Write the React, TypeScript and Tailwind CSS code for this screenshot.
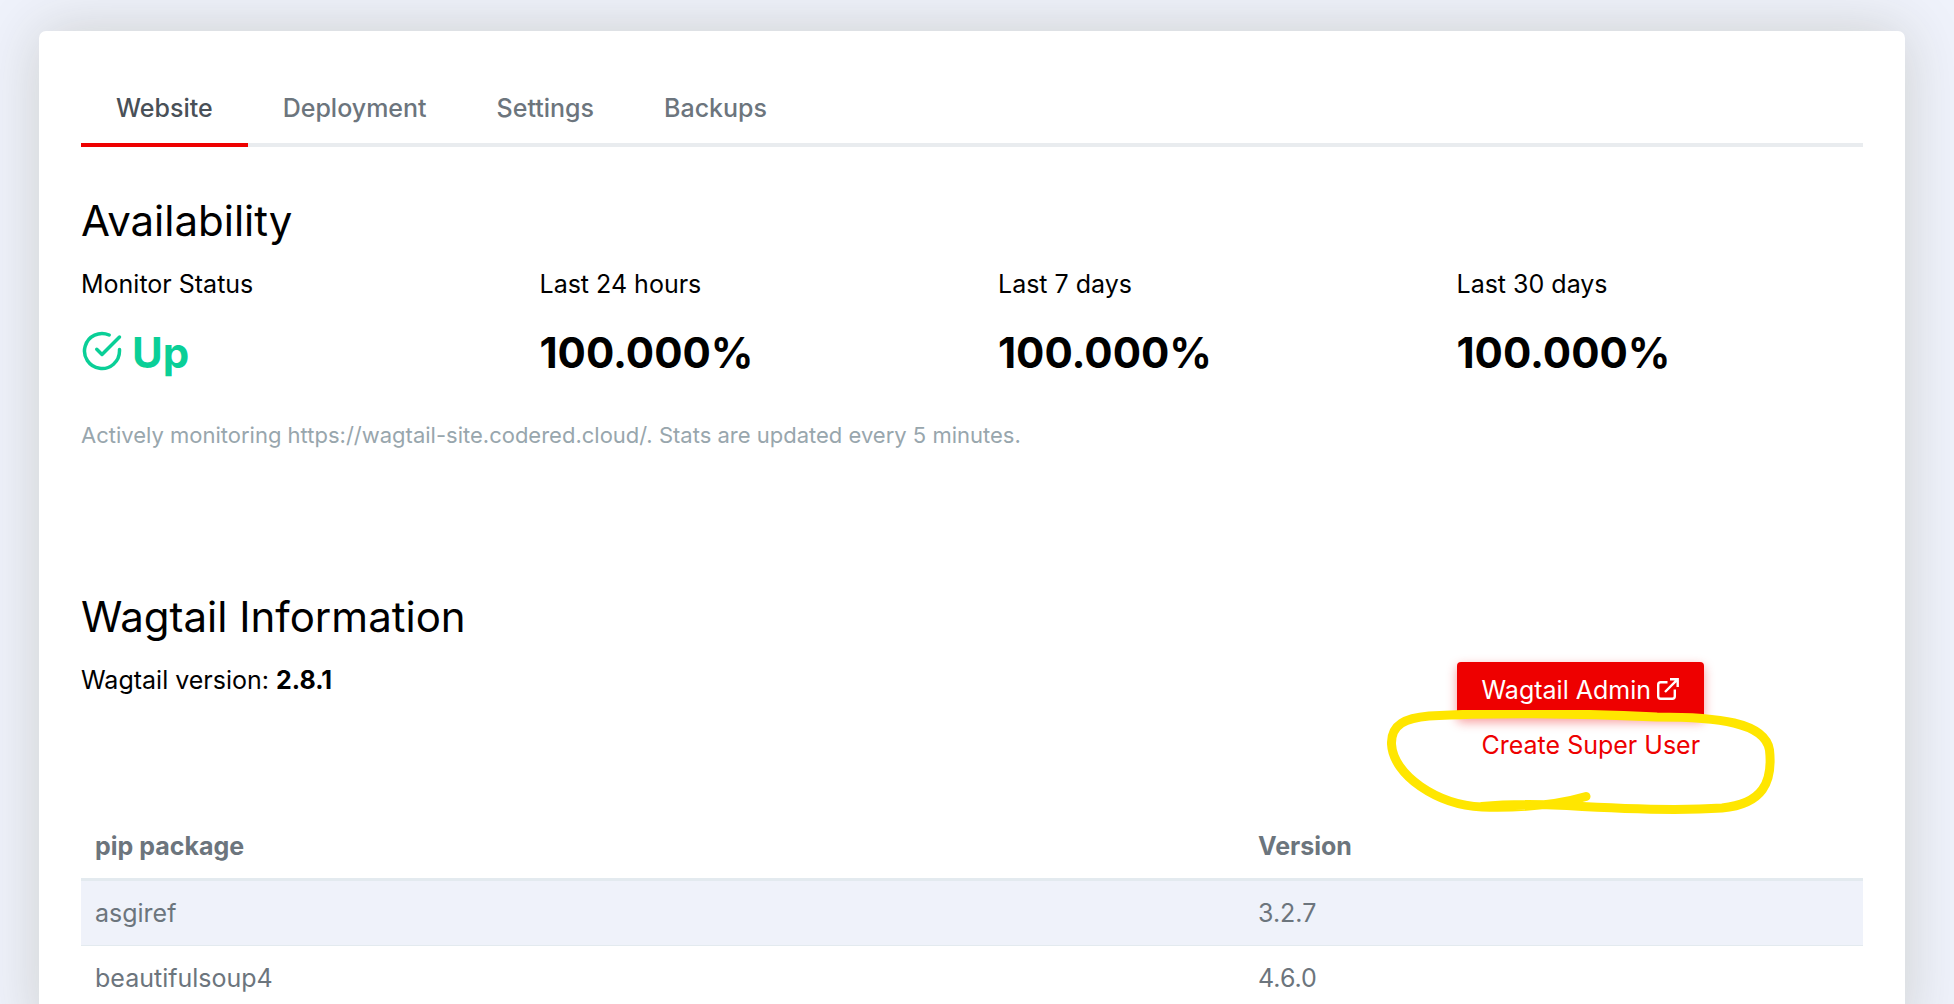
const tabs = ['Website', 'Deployment', 'Settings', 'Backups']

const uptime = [
  { label: 'Last 24 hours', value: '100.000%' },
  { label: 'Last 7 days', value: '100.000%' },
  { label: 'Last 30 days', value: '100.000%' },
]

const packages = [
  { name: 'asgiref', version: '3.2.7' },
  { name: 'beautifulsoup4', version: '4.6.0' },
]

function CheckCircle({ className }: { className?: string }) {
  return (
    <svg viewBox="0 0 24 24" fill="none" stroke="currentColor" strokeWidth="2" strokeLinecap="round" strokeLinejoin="round" className={className} aria-hidden="true">
      <path d="M22 11.08V12a10 10 0 1 1-5.93-9.14" />
      <polyline points="22 4 12 14.01 9 11.01" />
    </svg>
  )
}

function ExternalLink({ className }: { className?: string }) {
  return (
    <svg viewBox="0 0 22 22" fill="none" stroke="currentColor" strokeWidth="2.4" className={className} aria-hidden="true">
      <path d="M10.5 4.2H3.700a2.500 2.500 0 0 0-2.500 2.500v11.600a2.500 2.500 0 0 0 2.500 2.500h11.600a2.500 2.500 0 0 0 2.500-2.500v-6.800" />
      <path d="M13 1.300H20.700V9M20.300 1.700L8 14" />
    </svg>
  )
}

// Hand drawn ring around the super user link
function Highlight() {
  return (
    <svg viewBox="0 0 390 106" fill="none" className="pointer-events-none absolute -left-[70px] -top-2 h-[106px] w-[390px]" aria-hidden="true">
      <path
        d="M199 86.500C170 95 130 98 95 97C50 95 6 65 4.500 34C4 14 19 8 42 6C100 2.500 190 3 270 7C330 7 378 12 382.500 40C386 72 376 94 335 98C290 101 220 98 180 95.500C150 94 120 94 95 96.500"
        stroke="#ffe600"
        strokeWidth="9"
        strokeLinecap="round"
        strokeLinejoin="round"
      />
    </svg>
  )
}

export default function App() {
  return (
    <div className="h-screen overflow-hidden bg-[#eff2fb] pl-[39px] pr-[49px] pt-[31px] font-['Inter',sans-serif] text-[25px] leading-[37px] text-black">
      <main className="min-h-screen rounded-[7px] bg-white px-[42px] pt-[42px] shadow-[0_0_61px_rgba(50,48,0,0.18)]">
        <nav className="flex border-b-4 border-[#e9ecef] font-medium">
          {tabs.map((tab, i) => (
            <a
              key={tab}
              href="#"
              className={
                i === 0
                  ? '-mb-1 border-b-4 border-[#ee0000] px-[35px] pb-[16px] pt-[17px] text-[#495057]'
                  : 'px-[35px] pb-[16px] pt-[17px] text-[#6c757d]'
              }
            >
              {tab}
            </a>
          ))}
        </nav>

        <section className="pt-[49px]">
          <h2 className="text-[42px] leading-[50px]">Availability</h2>
          <div className="mt-5 grid grid-cols-4 gap-x-[52px]">
            <div>
              <p>Monitor Status</p>
              <p className="mt-[25px] flex items-center gap-[9px] text-[42px] font-bold leading-[50px] text-[#0acf97]">
                <CheckCircle className="mb-1 size-[42px]" />
                Up
              </p>
            </div>
            {uptime.map((item) => (
              <div key={item.label}>
                <p>{item.label}</p>
                <p className="mt-[25px] text-[42px] font-bold leading-[50px]">{item.value}</p>
              </div>
            ))}
          </div>
          <p className="mt-[39px] text-[22px] text-[#98a6ad]">
            Actively monitoring https://wagtail-site.codered.cloud/. Stats are updated every 5 minutes.
          </p>
        </section>

        <section className="pt-[138px]">
          <h2 className="text-[42px] leading-[50px]">Wagtail Information</h2>
          <div className="mt-5 grid grid-cols-4 gap-x-[52px]">
            <p className="col-span-3">
              Wagtail version: <strong className="font-bold">2.8.1</strong>
            </p>
            <div className="flex flex-col items-start">
              <a
                href="#"
                className="flex items-center gap-[6px] rounded-[4px] bg-[#ee0000] px-[25px] pb-[9px] pt-[10px] text-white shadow-[0_4px_11px_rgba(238,0,0,0.4)]"
              >
                Wagtail Admin
                <ExternalLink className="mb-1 size-[22px]" />
              </a>
              <div className="relative">
                <a href="#" className="block px-[25px] py-[9px] text-[#ee0000]">
                  Create Super User
                </a>
                <Highlight />
              </div>
            </div>
          </div>
        </section>

        <table className="mt-10 w-full text-left text-[#6c757d]">
          <thead>
            <tr className="border-b-[3px] border-[#e3eaef]">
              <th className="w-[1163px] px-[14px] pb-[13px] pt-[15px] font-bold">pip package</th>
              <th className="px-[14px] pb-[13px] pt-[15px] font-bold">Version</th>
            </tr>
          </thead>
          <tbody>
            {packages.map((pkg) => (
              <tr key={pkg.name} className="border-b border-[#e3eaef] odd:bg-[#eff2fa]">
                <td className="px-[14px] pb-[13px] pt-[14px]">{pkg.name}</td>
                <td className="px-[14px] pb-[13px] pt-[14px]">{pkg.version}</td>
              </tr>
            ))}
          </tbody>
        </table>
      </main>
    </div>
  )
}
